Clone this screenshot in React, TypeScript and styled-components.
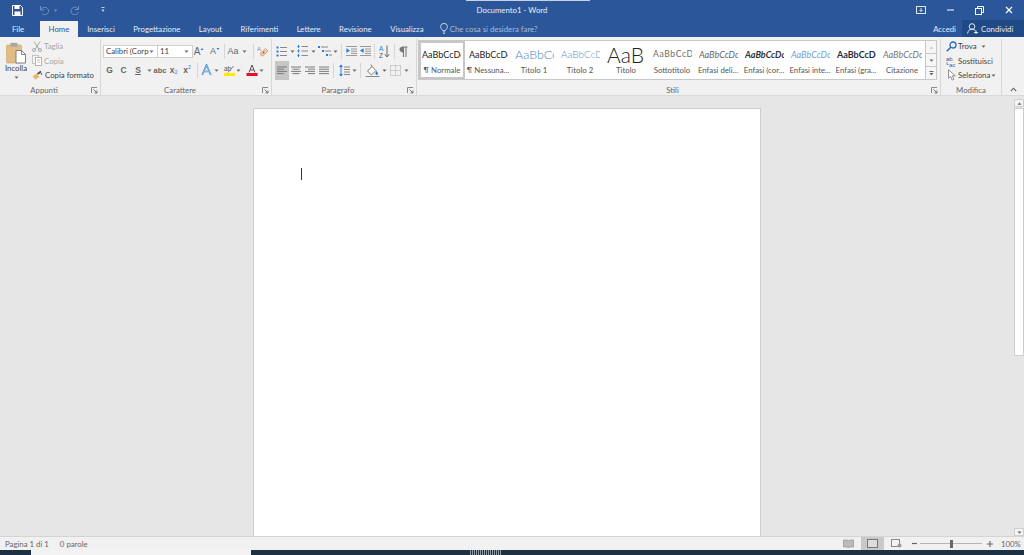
import React from "react";
import styled, { createGlobalStyle } from "styled-components";

const Global = createGlobalStyle`
  html, body { margin: 0; padding: 0; background: #e6e6e6; overflow: hidden; }
  * { box-sizing: border-box; }
  #root { width: 1024px; height: 555px; }
`;

const Shell = styled.div`
  width: 1024px; height: 555px; display: flex; flex-direction: column; overflow: hidden;
  font-family: Lato, "Open Sans", "Liberation Sans", sans-serif;
  font-size: 7.8px; color: #505050;
`;
const TitleBar = styled.div`
  height: 20px; flex: none; background: #2b579a; display: grid;
  grid-template-columns: 1fr auto 1fr; align-items: center; color: #fff; position: relative;
`;
const Strip = styled.div`
  position: absolute; left: 466px; top: 0; width: 124px; height: 1px; background: #c9d2e0;
`;
const Qat = styled.div`display: flex; align-items: center; padding-left: 11px;`;
const Title = styled.div`color: #e9eef6;`;
const WinBtns = styled.div`display: flex; justify-content: flex-end; align-items: center;`;
const Cell = styled.span<{ $w: number; $j?: string }>`
  width: ${(p) => p.$w}px; flex: none; display: inline-flex; align-items: center;
  justify-content: ${(p) => p.$j || "center"}; height: 100%;
`;
const TabBar = styled.div`
  height: 17px; flex: none; background: #2b579a; display: flex; align-items: stretch; color: #e4eaf4;
`;
const Tab = styled.div<{ $active?: boolean; $w?: number }>`
  display: flex; align-items: center; justify-content: center;
  ${(p) => (p.$w ? `width:${p.$w}px;` : "padding: 0 9.2px;")}
  background: ${(p) => (p.$active ? "#f1f1f1" : "transparent")};
  color: ${(p) => (p.$active ? "#2b579a" : "#e4eaf4")};
  margin-top: ${(p) => (p.$active ? "1px" : "0")};
  margin-left: ${(p) => (p.$active ? "4px" : "0")};
`;
const Tell = styled.div`
  display: flex; align-items: center; gap: 2px; margin-left: 7px; color: #a9bcd8;
`;
const Spring = styled.div`flex: 1;`;
const Accedi = styled.div`display: flex; align-items: center; margin-right: 6px; color: #e4eaf4;`;
const Share = styled.div`
  width: 62px; background: #204a85; display: flex; align-items: center; gap: 3px;
  padding-left: 5px; color: #e4eaf4;
`;
const Ribbon = styled.div`
  height: 59px; flex: none; background: #f1f1f1; display: flex;
  border-bottom: 1px solid #dadada;
`;
const Group = styled.div<{ $w: number }>`
  width: ${(p) => p.$w}px; flex: none; display: flex; flex-direction: column;
  position: relative; margin: 2px 0 0;
  border-right: 1px solid #d8d8d8;
`;
const Body = styled.div`flex: 1; min-height: 0; display: flex;`;
const Stack = styled.div<{ $left?: number }>`
  flex: 1; display: flex; flex-direction: column; gap: 5px; padding: 5px 0 0 ${(p) => p.$left ?? 0}px;
`;
const Row = styled.div`height: 14px; display: flex; align-items: center;`;
const LabelRow = styled.div`
  height: 10px; flex: none; display: grid; grid-template-columns: 1fr 12px; align-items: center;
  text-align: center; color: #666;
`;
const PlainLabel = styled.div`
  height: 10px; flex: none; text-align: center; color: #666; line-height: 10px;
`;
const Launch = styled.span`display: flex; justify-content: center; align-items: center;`;
const Paste = styled.div`
  width: 30px; flex: none; display: flex; flex-direction: column; align-items: center;
  padding: 3px 0 0 2px; gap: 0;
`;
const PasteText = styled.div`margin: -2px 0 2px; line-height: 12px; color: #444;`;
const ClipList = styled.div`
  display: flex; flex-direction: column; padding-top: 0; margin-left: 2px;
`;
const ClipItem = styled.div<{ $off?: boolean }>`
  height: 14.5px; display: flex; align-items: center; gap: 2px; white-space: nowrap;
  color: ${(p) => (p.$off ? "#a8a8a8" : "#444")};
`;
const Combo = styled.div<{ $w: number }>`
  width: ${(p) => p.$w}px; height: 13px; flex: none; background: #fff; border: 1px solid #cfcfcf;
  display: flex; align-items: center; justify-content: space-between; padding: 0 3px 0 2px;
  margin-right: -1px; color: #444; white-space: nowrap;
`;
const Sep = styled.span<{ $ml: number; $mr: number }>`
  width: 1px; height: 15px; flex: none; background: #d6d6d6;
  margin: 0 ${(p) => p.$mr}px 0 ${(p) => p.$ml}px;
`;
const Fmt = styled.span<{ $c?: string; $b?: boolean; $s?: number; $u?: boolean }>`
  font-family: "Liberation Sans", sans-serif; font-size: ${(p) => p.$s ?? 8.5}px;
  font-weight: ${(p) => (p.$b ? 700 : 400)}; color: ${(p) => p.$c ?? "#666"};
  text-decoration: ${(p) => (p.$u ? "underline" : "none")};
`;
const Sub = styled.span<{ $up?: boolean }>`
  font-size: 5px; color: #2b7cd3; position: relative; top: ${(p) => (p.$up ? -3 : 2)}px;
`;
const Selected = styled.span`
  width: 14px; height: 19px; flex: none; background: #c6c6c6; display: inline-flex;
  align-items: center; justify-content: center; margin-left: 1px;
`;
const Gallery = styled.div`
  margin: 1px 0 0 1px; width: 519px; height: 40px; background: #fff; border: 1px solid #c8c8c8;
  display: flex;
`;
const StyleItem = styled.div<{ $on?: boolean }>`
  width: 46px; flex: none; display: flex; flex-direction: column; align-items: center;
  overflow: hidden; border: ${(p) => (p.$on ? "2px solid #c6c6c6" : "none")};
`;
const Preview = styled.div<{ $s: number; $c: string; $b?: boolean; $i?: boolean; $ls?: number; $on?: boolean; $wt?: number }>`
  height: ${(p) => (p.$on ? 22 : 24)}px; width: 100%; padding: ${(p) => (p.$on ? 1 : 3)}px 0 0 ${(p) => (p.$on ? 1 : 4)}px;
  overflow: hidden; white-space: nowrap;
  display: flex; align-items: center;
  font-family: Lato, "Liberation Sans", sans-serif; font-size: ${(p) => p.$s}px; line-height: 21px;
  color: ${(p) => p.$c}; font-weight: ${(p) => p.$wt ?? (p.$b ? 700 : 400)};
  font-style: ${(p) => (p.$i ? "italic" : "normal")}; letter-spacing: ${(p) => p.$ls ?? 0}px;
`;
const PreviewInner = styled.span`display: block; width: 39px; overflow: hidden;`;
const StyleName = styled.div`line-height: 10px; white-space: nowrap; color: #555;`;
const GalleryScroll = styled.div`
  width: 11px; flex: none; margin-left: auto; display: flex; flex-direction: column;
  border-left: 1px solid #c8c8c8; background: #f6f6f6;
`;
const ScrollCell = styled.div<{ $last?: boolean }>`
  flex: 1; display: flex; align-items: center; justify-content: center;
  border-bottom: ${(p) => (p.$last ? "none" : "1px solid #c8c8c8")};
`;
const EditList = styled.div`display: flex; flex-direction: column; padding: 0 0 0 5px; flex: 1;`;
const EditItem = styled.div`
  height: 14.5px; display: flex; align-items: center; gap: 1px; color: #444; white-space: nowrap;
`;
const Collapse = styled.div`
  flex: 1; display: flex; align-items: flex-end; justify-content: center; padding-bottom: 3px;
`;
const DocArea = styled.div`flex: 1; min-height: 0; display: flex; background: #e6e6e6;`;
const Canvas = styled.div`flex: 1; padding: 12px 0 0; display: flex; justify-content: center;`;
const Page = styled.div`
  width: 508px; height: 100%; background: #fff; border: 1px solid #cfcfcf; border-bottom: none;
  padding: 59px 47px;
`;
const Caret = styled.div`width: 1px; height: 12px; background: #333;`;
const VScroll = styled.div`
  width: 10px; flex: none; display: flex; flex-direction: column; background: #e6e6e6;
  padding-top: 3px;
`;
const Arrow = styled.div`
  height: 8px; flex: none; display: flex; align-items: center; justify-content: center;
  background: #f4f4f4; border: 1px solid #cfcfcf;
`;
const Thumb = styled.div`height: 248px; flex: none; background: #fff; border: 1px solid #cdcdcd; margin-top: 1px;`;
const Status = styled.div`
  height: 14px; flex: none; background: #f1f1f1; border-top: 1px solid #d4d4d4;
  display: flex; align-items: center; color: #666;
`;
const StatusText = styled.span<{ $ml: number }>`margin-left: ${(p) => p.$ml}px; white-space: nowrap;`;
const ViewSel = styled.span`
  width: 23px; height: 13px; background: #c9c9c9; display: inline-flex; align-items: center;
  justify-content: center; margin: 0 3px;
`;
const Slider = styled.div`
  width: 62px; height: 1px; background: #b5b5b5; position: relative; margin: 0 3px 0 1px;
`;
const SliderThumb = styled.div`
  position: absolute; left: 30px; top: -3px; width: 3px; height: 8px; background: #666;
`;
const Taskbar = styled.div`height: 5px; flex: none; background: #1c3242; display: flex; align-items: stretch;`;
const TaskSearch = styled.div`width: 220px; margin-left: 31px; background: #f3f3f3;`;
const TaskHatch = styled.div`
  width: 32px; margin-left: 219px;
  background: repeating-linear-gradient(90deg, #8d99a3 0 1px, #1c3242 1px 2px);
`;
const Zoom = styled.span`width: 17px; flex: none; white-space: nowrap; color: #666;`;

type SP = React.SVGProps<SVGSVGElement> & { w?: number; h?: number };
const S = ({ w = 12, h = 12, children, ...r }: SP) => (
  <svg width={w} height={h} viewBox={`0 0 ${w} ${h}`} fill="none" {...r}>{children}</svg>
);
const Caretd = ({ c = "#666" }: { c?: string }) => (
  <S w={5} h={3}><path d="M0.5 0.5h4L2.5 2.8z" fill={c} /></S>
);
const Lines = ({ kind }: { kind: "l" | "c" | "r" | "j" }) => {
  const rows: [number, number][] = kind === "l" ? [[0, 10], [0, 7], [0, 10], [0, 7]]
    : kind === "c" ? [[0, 10], [1.5, 8.5], [0, 10], [1.5, 8.5]]
    : kind === "r" ? [[0, 10], [3, 10], [0, 10], [3, 10]] : [[0, 10], [0, 10], [0, 10], [0, 10]];
  return (
    <S w={10} h={9}>
      {rows.map(([a, b], i) => <path key={i} d={`M${a} ${1 + i * 2.2}H${b}`} stroke="#7a7a7a" />)}
    </S>
  );
};
const Launcher = () => (
  <S w={7} h={7}>
    <path d="M0.5 6V0.5H6" stroke="#888" />
    <path d="M2.5 2.5L6 6M6 3.5V6H3.5" stroke="#777" />
  </S>
);
const Bullets = () => (
  <S w={11} h={11}>
    {[1.5, 5.5, 9.5].map((y) => (
      <g key={y}><rect x={0.5} y={y - 1} width={2} height={2} fill="#2b7cd3" /><path d={`M4 ${y}H11`} stroke="#888" /></g>
    ))}
  </S>
);
const Numbers = () => (
  <S w={11} h={12}>
    {[1.5, 6, 10.5].map((y) => (
      <g key={y}><path d={`M1.5 ${y - 1.5}v3`} stroke="#2b7cd3" /><path d={`M0 ${y}h3`} stroke="#2b7cd3" strokeWidth={0.5} /><path d={`M4.5 ${y}H11`} stroke="#888" /></g>
    ))}
  </S>
);
const Multi = () => (
  <S w={14} h={12}>
    <rect x={0} y={1} width={2} height={2} fill="#2b7cd3" /><path d="M3 2h7" stroke="#888" />
    <rect x={4} y={5} width={2} height={2} fill="#2b7cd3" /><path d="M7 6h6" stroke="#888" />
    <rect x={8} y={9} width={2} height={2} fill="#2b7cd3" /><path d="M11 10h3" stroke="#888" />
  </S>
);
const Indent = ({ out }: { out?: boolean }) => (
  <S w={11} h={10}>
    <path d="M0 0.5h11M5 3h6M5 5.2h6M5 7.4h6M0 9.5h11" stroke="#999" />
    <path d={out ? "M0 4.6l3.6-2.4v4.8z" : "M4 4.6L0.4 2.2v4.8z"} fill="#2b7cd3" />
  </S>
);
const Sort = () => (
  <S w={11} h={13}>
    <text x={0} y={6} fontSize={6.5} fill="#2b7cd3" fontFamily="Liberation Sans">A</text>
    <text x={0} y={12.5} fontSize={6.5} fill="#555" fontFamily="Liberation Sans">Z</text>
    <path d="M8 0.5v11M5.8 9.3L8 12l2.2-2.7" stroke="#666" />
  </S>
);
const Pilcrow = () => (
  <S w={9} h={11}>
    <path d="M4 1h4.5M4.5 1v10M7 1v10" stroke="#777" strokeWidth={1.1} />
    <path d="M4.5 0.6C1.4 0.6 0.5 2.2 0.5 3.5s1 2.9 4 2.9z" fill="#777" />
  </S>
);
const LineSpacing = () => (
  <S w={11} h={13}>
    <path d="M2 1v11" stroke="#2b7cd3" />
    <path d="M0 3l2-2.6L4 3zM0 10l2 2.6L4 10z" fill="#2b7cd3" />
    <path d="M5 3h6M5 5.5h6M5 8h6M5 10.5h6" stroke="#888" />
  </S>
);
const Shade = () => (
  <S w={15} h={13}>
    <path d="M2.5 7L7 2.5l4 4L6.5 11z" fill="#fff" stroke="#777" />
    <path d="M7 2.5L6 0.5" stroke="#777" />
    <path d="M11.5 7c1 1.2 1.5 2 1.5 2.6a1.2 1.2 0 0 1-2.6 0c0-.6.4-1.4 1.1-2.6z" fill="#2b7cd3" />
    <path d="M0.5 12.5h14" stroke="#888" />
  </S>
);
const Borders = () => (
  <S w={11} h={11}>
    <rect x={0.5} y={0.5} width={10} height={10} stroke="#aaa" strokeDasharray="1 1" />
    <path d="M5.5 0.5v10M0.5 5.5h10" stroke="#aaa" strokeDasharray="1 1" />
  </S>
);
const Eraser = () => (
  <S w={11} h={12}>
    <text x={0} y={6} fontSize={6} fill="#888" fontFamily="Liberation Sans">A</text>
    <path d="M3 8.5L8.5 3.5L11 6L6 11H4.5z" fill="#f2c9a5" stroke="#c98a5a" strokeWidth={0.6} />
    <circle cx={6.5} cy={7.5} r={0.9} fill="#d9463a" />
  </S>
);
const GrowA = ({ up, s }: { up?: boolean; s: number }) => (
  <>
    <Fmt $s={s} $c="#666">A</Fmt>
    <S w={4} h={8}><path d={up ? "M0.5 3L2 1l1.5 2z" : "M0.5 1L2 3l1.5-2z"} fill="#2b7cd3" /></S>
  </>
);
const EffectA = () => (
  <S w={11} h={12}>
    <path d="M1.2 11L5.5 1l4.3 10M3 7.5h5" stroke="#2b7cd3" strokeWidth={1.6} />
    <path d="M1.2 11L5.5 1l4.3 10M3 7.5h5" stroke="#dfeaf8" strokeWidth={0.5} />
  </S>
);
const Highlight = () => (
  <S w={11} h={12}>
    <text x={0} y={6.5} fontSize={6.5} fill="#555" fontFamily="Liberation Sans">ab</text>
    <path d="M4 8.5L9.5 2" stroke="#777" />
    <rect x={0} y={9} width={11} height={3} fill="#ffeb00" />
  </S>
);
const ColorA = () => (
  <S w={12} h={12}>
    <path d="M3 8.5L6 1l3 7.5M4 6h4" stroke="#555" />
    <rect x={0.5} y={9} width={11} height={3} fill="#e81123" />
  </S>
);
const Clip = () => (
  <S w={20} h={22}>
    <rect x={0.5} y={3} width={15} height={18} rx={1} fill="#e2bd83" stroke="#c9a268" strokeWidth={0.6} />
    <rect x={4.5} y={0.8} width={7} height={4} fill="#a8a8a8" />
    <path d="M10 8.5h5.5l4 4V21H10z" fill="#fff" stroke="#666" strokeWidth={0.8} />
    <path d="M15.5 8.5v4h4" stroke="#666" strokeWidth={0.8} />
  </S>
);
const Scissors = () => (
  <S w={10} h={11}>
    <path d="M2 0.5l5 8M8 0.5l-5 8" stroke="#a8a8a8" />
    <circle cx={2} cy={9} r={1.5} stroke="#a8a8a8" /><circle cx={8} cy={9} r={1.5} stroke="#a8a8a8" />
  </S>
);
const CopyI = () => (
  <S w={10} h={11}>
    <rect x={0.5} y={0.5} width={6} height={8} stroke="#c4c4c4" fill="#f4f4f4" />
    <rect x={3.5} y={2.5} width={6} height={8} stroke="#b4b4b4" fill="#fff" />
    <path d="M5 5h3M5 7h3" stroke="#c4c4c4" />
  </S>
);
const Brush = () => (
  <S w={11} h={10}>
    <path d="M0.5 6.5L4.5 3.5L7.5 7L3.5 9.5z" fill="#e8b563" />
    <path d="M5.5 4L9 1.5" stroke="#444" strokeWidth={1.6} />
    <circle cx={9.5} cy={4} r={0.8} fill="#444" />
  </S>
);
const Magnifier = () => (
  <S w={11} h={11}>
    <circle cx={7} cy={4} r={3} stroke="#2b6cb8" strokeWidth={1.3} />
    <path d="M4.7 6.3L0.8 10.2" stroke="#2b6cb8" strokeWidth={1.6} />
  </S>
);
const Replace = () => (
  <S w={11} h={12}>
    <text x={0} y={5.5} fontSize={6} fill="#555" fontFamily="Liberation Sans">ab</text>
    <text x={3} y={11.5} fontSize={6} fill="#2b6cb8" fontFamily="Liberation Sans">ac</text>
    <path d="M1 7v2.5h1.5" stroke="#2b6cb8" strokeWidth={0.7} />
  </S>
);
const Pointer = () => (
  <S w={11} h={12}>
    <path d="M2.5 0.8v8.6l2.2-2 1.5 3.6 1.6-.7-1.5-3.5h3z" fill="#fff" stroke="#777" strokeWidth={0.8} />
  </S>
);
const Person = ({ c = "#e4eaf4" }: { c?: string }) => (
  <S w={11} h={11}>
    <circle cx={5} cy={3.5} r={2.8} stroke={c} />
    <path d="M0.6 10.5c.4-3 2-4.2 4.4-4.2s3 .7 3.6 1.6M7 9.5h4M9 7.5v3.5" stroke={c} />
  </S>
);
const Bulb = () => (
  <S w={8} h={11}>
    <path d="M2.6 7.6C2.2 6.2.6 5.6.6 3.6a3.4 3.2 0 0 1 6.8 0c0 2-1.6 2.6-2 4z" stroke="#c4d2e6" />
    <path d="M2.8 9h2.4M3.2 10.5h1.6" stroke="#c4d2e6" />
  </S>
);

const styleItems = [
  { p: "AaBbCcDc", n: "¶ Normale", s: 9, c: "#222", on: true },
  { p: "AaBbCcDc", n: "¶ Nessuna...", s: 9, c: "#222" },
  { p: "AaBbCc", n: "Titolo 1", s: 12.5, c: "#4a83c6", wt: 300 },
  { p: "AaBbCcDc", n: "Titolo 2", s: 10, c: "#5a8fcb", wt: 300 },
  { p: "AaB", n: "Titolo", s: 21, c: "#222", wt: 300 },
  { p: "AaBbCcDc", n: "Sottotitolo", s: 8.6, c: "#6e6e6e", ls: 0.6 },
  { p: "AaBbCcDc", n: "Enfasi deli...", s: 9, c: "#666", i: true },
  { p: "AaBbCcDc", n: "Enfasi (cor...", s: 9, c: "#333", i: true, b: true },
  { p: "AaBbCcDc", n: "Enfasi inte...", s: 9, c: "#6f9fd4", i: true },
  { p: "AaBbCcDc", n: "Enfasi (gra...", s: 9, c: "#1f2d3d", b: true },
  { p: "AaBbCcDc", n: "Citazione", s: 9, c: "#777", i: true },
];

export default function App() {
  return (
    <Shell>
      <Global />
      <TitleBar>
        <Strip />
        <Qat>
          <Cell $w={12}>
            <S w={11} h={11}>
              <path d="M0.5 0.5h8l2 2v8h-10z" stroke="#fff" />
              <rect x={2.5} y={0.5} width={5} height={3.5} fill="#fff" />
              <rect x={2.5} y={6.5} width={6} height={4} fill="#fff" />
            </S>
          </Cell>
          <Cell $w={15} />
          <Cell $w={12}>
            <S w={11} h={10}><path d="M1.5 1v4h4M1.8 5a4 3.6 0 1 1 1.4 3.8" stroke="#6f8fc0" /></S>
          </Cell>
          <Cell $w={10}><Caretd c="#6f8fc0" /></Cell>
          <Cell $w={29}>
            <S w={10} h={10}><path d="M8.5 1v3.5h-3.5M8.2 4.5A3.8 3.8 0 1 0 8.4 7" stroke="#6f8fc0" /></S>
          </Cell>
          <Cell $w={11} />
          <Cell $w={6}>
            <S w={4} h={6}><path d="M0.5 0.5h3" stroke="#c4d2e6" /><path d="M0.5 2.5h3L2 5z" fill="#c4d2e6" /></S>
          </Cell>
        </Qat>
        <Title>Documento1 - Word</Title>
        <WinBtns>
          <Cell $w={10}>
            <S w={10} h={8}>
              <rect x={0.5} y={0.5} width={9} height={7} stroke="#dfe6f2" />
              <path d="M5 2v3.5M3.5 4L5 5.5 6.5 4" stroke="#dfe6f2" />
            </S>
          </Cell>
          <Cell $w={10} />
          <Cell $w={29}>
            <S w={7} h={2}><path d="M0 1h7" stroke="#fff" /></S>
          </Cell>
          <Cell $w={29}>
            <S w={9} h={9}>
              <rect x={0.5} y={2.5} width={6} height={6} stroke="#fff" fill="#2b579a" />
              <path d="M2.5 2.5v-2h6v6h-2" stroke="#fff" />
            </S>
          </Cell>
          <Cell $w={30}>
            <S w={8} h={8}><path d="M1 1l6 6M7 1L1 7" stroke="#fff" strokeWidth={1.2} /></S>
          </Cell>
        </WinBtns>
      </TitleBar>

      <TabBar>
        <Tab $w={36}>File</Tab>
        <Tab $w={38} $active>Home</Tab>
        <Tab>Inserisci</Tab>
        <Tab>Progettazione</Tab>
        <Tab>Layout</Tab>
        <Tab>Riferimenti</Tab>
        <Tab>Lettere</Tab>
        <Tab>Revisione</Tab>
        <Tab>Visualizza</Tab>
        <Tell><Bulb /> Che cosa si desidera fare?</Tell>
        <Spring />
        <Accedi>Accedi</Accedi>
        <Share><Person /> Condividi</Share>
      </TabBar>

      <Ribbon>
        <Group $w={101}>
          <Body>
            <Paste>
              <Clip />
              <PasteText>Incolla</PasteText>
              <Caretd />
            </Paste>
            <ClipList>
              <ClipItem $off><Scissors /> Taglia</ClipItem>
              <ClipItem $off><CopyI /> Copia</ClipItem>
              <ClipItem><Brush /> Copia formato</ClipItem>
            </ClipList>
          </Body>
          <LabelRow><span>Appunti</span><Launch><Launcher /></Launch></LabelRow>
        </Group>

        <Group $w={171}>
          <Body>
            <Stack $left={2}>
              <Row>
                <Combo $w={55}>Calibri (Corp <Caretd /></Combo>
                <Combo $w={36}>11 <Caretd /></Combo>
                <Cell $w={14}><GrowA up s={10} /></Cell>
                <Cell $w={18}><GrowA s={9} /></Cell>
                <Sep $ml={0} $mr={1} />
                <Cell $w={14}><Fmt $s={9}>Aa</Fmt></Cell>
                <Cell $w={8}><Caretd /></Cell>
                <Sep $ml={5} $mr={2} />
                <Cell $w={12}><Eraser /></Cell>
              </Row>
              <Row>
                <Cell $w={13}><Fmt $b>G</Fmt></Cell>
                <Cell $w={15}><Fmt $b>C</Fmt></Cell>
                <Cell $w={14}><Fmt $b $u>S</Fmt></Cell>
                <Cell $w={8}><Caretd /></Cell>
                <Cell $w={14}><Fmt $s={7.5} $b>abc</Fmt></Cell>
                <Cell $w={13}><Fmt $b>x</Fmt><Sub>2</Sub></Cell>
                <Cell $w={14}><Fmt $b>x</Fmt><Sub $up>2</Sub></Cell>
                <Sep $ml={3} $mr={3} />
                <Cell $w={11}><EffectA /></Cell>
                <Cell $w={8}><Caretd /></Cell>
                <Cell $w={3} />
                <Cell $w={12}><Highlight /></Cell>
                <Cell $w={7}><Caretd /></Cell>
                <Cell $w={3} />
                <Cell $w={13}><ColorA /></Cell>
                <Cell $w={7}><Caretd /></Cell>
              </Row>
            </Stack>
          </Body>
          <LabelRow><span>Carattere</span><Launch><Launcher /></Launch></LabelRow>
        </Group>

        <Group $w={145}>
          <Body>
            <Stack $left={2}>
              <Row>
                <Cell $w={14}><Bullets /></Cell>
                <Cell $w={8}><Caretd /></Cell>
                <Cell $w={13}><Numbers /></Cell>
                <Cell $w={8}><Caretd /></Cell>
                <Cell $w={15}><Multi /></Cell>
                <Cell $w={7}><Caretd /></Cell>
                <Sep $ml={2} $mr={3} />
                <Cell $w={12}><Indent /></Cell>
                <Cell $w={2} />
                <Cell $w={12}><Indent out /></Cell>
                <Sep $ml={3} $mr={4} />
                <Cell $w={11}><Sort /></Cell>
                <Sep $ml={4} $mr={3} />
                <Cell $w={10}><Pilcrow /></Cell>
              </Row>
              <Row>
                <Selected><Lines kind="l" /></Selected>
                <Cell $w={14}><Lines kind="c" /></Cell>
                <Cell $w={14}><Lines kind="r" /></Cell>
                <Cell $w={14}><Lines kind="j" /></Cell>
                <Sep $ml={2} $mr={5} />
                <Cell $w={11}><LineSpacing /></Cell>
                <Cell $w={8}><Caretd /></Cell>
                <Sep $ml={2} $mr={4} />
                <Cell $w={15}><Shade /></Cell>
                <Cell $w={8}><Caretd /></Cell>
                <Cell $w={2} />
                <Cell $w={11}><Borders /></Cell>
                <Cell $w={10}><Caretd /></Cell>
              </Row>
            </Stack>
          </Body>
          <LabelRow><span>Paragrafo</span><Launch><Launcher /></Launch></LabelRow>
        </Group>

        <Group $w={524}>
          <Body>
            <Gallery>
              {styleItems.map((it) => (
                <StyleItem key={it.n} $on={it.on}>
                  <Preview $s={it.s} $c={it.c} $b={it.b} $i={it.i} $ls={it.ls} $on={it.on} $wt={it.wt}>
                    <PreviewInner>{it.p}</PreviewInner>
                  </Preview>
                  <StyleName>{it.n}</StyleName>
                </StyleItem>
              ))}
              <GalleryScroll>
                <ScrollCell><S w={5} h={3}><path d="M0.5 2.8h4L2.5 0.5z" fill="#c4c4c4" /></S></ScrollCell>
                <ScrollCell><Caretd /></ScrollCell>
                <ScrollCell $last>
                  <S w={5} h={5}><path d="M0.5 .5h4" stroke="#666" /><path d="M0.5 2h4L2.5 4.5z" fill="#666" /></S>
                </ScrollCell>
              </GalleryScroll>
            </Gallery>
          </Body>
          <LabelRow><span>Stili</span><Launch><Launcher /></Launch></LabelRow>
        </Group>

        <Group $w={61}>
          <Body>
            <EditList>
              <EditItem><Magnifier /> Trova <Cell $w={12}><Caretd /></Cell></EditItem>
              <EditItem><Replace /> Sostituisci</EditItem>
              <EditItem><Pointer /> Seleziona <Caretd /></EditItem>
            </EditList>
          </Body>
          <PlainLabel>Modifica</PlainLabel>
        </Group>

        <Collapse>
          <S w={7} h={5}><path d="M0.8 4L3.5 1.2 6.2 4" stroke="#666" strokeWidth={1.1} /></S>
        </Collapse>
      </Ribbon>

      <DocArea>
        <Canvas>
          <Page><Caret /></Page>
        </Canvas>
        <VScroll>
          <Arrow><S w={5} h={3}><path d="M0.5 2.8h4L2.5 0.5z" fill="#666" /></S></Arrow>
          <Thumb />
          <Spring />
          <Arrow><Caretd /></Arrow>
        </VScroll>
      </DocArea>

      <Status>
        <StatusText $ml={5}>Pagina 1 di 1</StatusText>
        <StatusText $ml={11}>0 parole</StatusText>
        <Spring />
        <Cell $w={11}>
          <S w={11} h={9}><path d="M0.5 1h4l1 1 1-1h4v7h-4l-1 1-1-1h-4z" fill="#bbb" stroke="#888" strokeWidth={0.6} /></S>
        </Cell>
        <Cell $w={4} />
        <ViewSel>
          <S w={11} h={9}><rect x={0.5} y={0.5} width={10} height={8} fill="#ddd" stroke="#777" /></S>
        </ViewSel>
        <Cell $w={4} />
        <Cell $w={11}>
          <S w={11} h={9}>
            <rect x={0.5} y={0.5} width={8} height={7} fill="#f4f4f4" stroke="#888" />
            <circle cx={8.5} cy={6.5} r={2} fill="#9a9a9a" />
          </S>
        </Cell>
        <Cell $w={8} />
        <Cell $w={9}><S w={5} h={3}><path d="M0 1.5h5" stroke="#666" strokeWidth={1.2} /></S></Cell>
        <Slider><SliderThumb /></Slider>
        <Cell $w={9}><S w={6} h={6}><path d="M0 3h6M3 0v6" stroke="#666" strokeWidth={1.1} /></S></Cell>
        <Cell $w={7} />
        <Zoom>100%</Zoom>
        <Cell $w={6} />
      </Status>
      <Taskbar>
        <TaskSearch />
        <TaskHatch />
      </Taskbar>
    </Shell>
  );
}
